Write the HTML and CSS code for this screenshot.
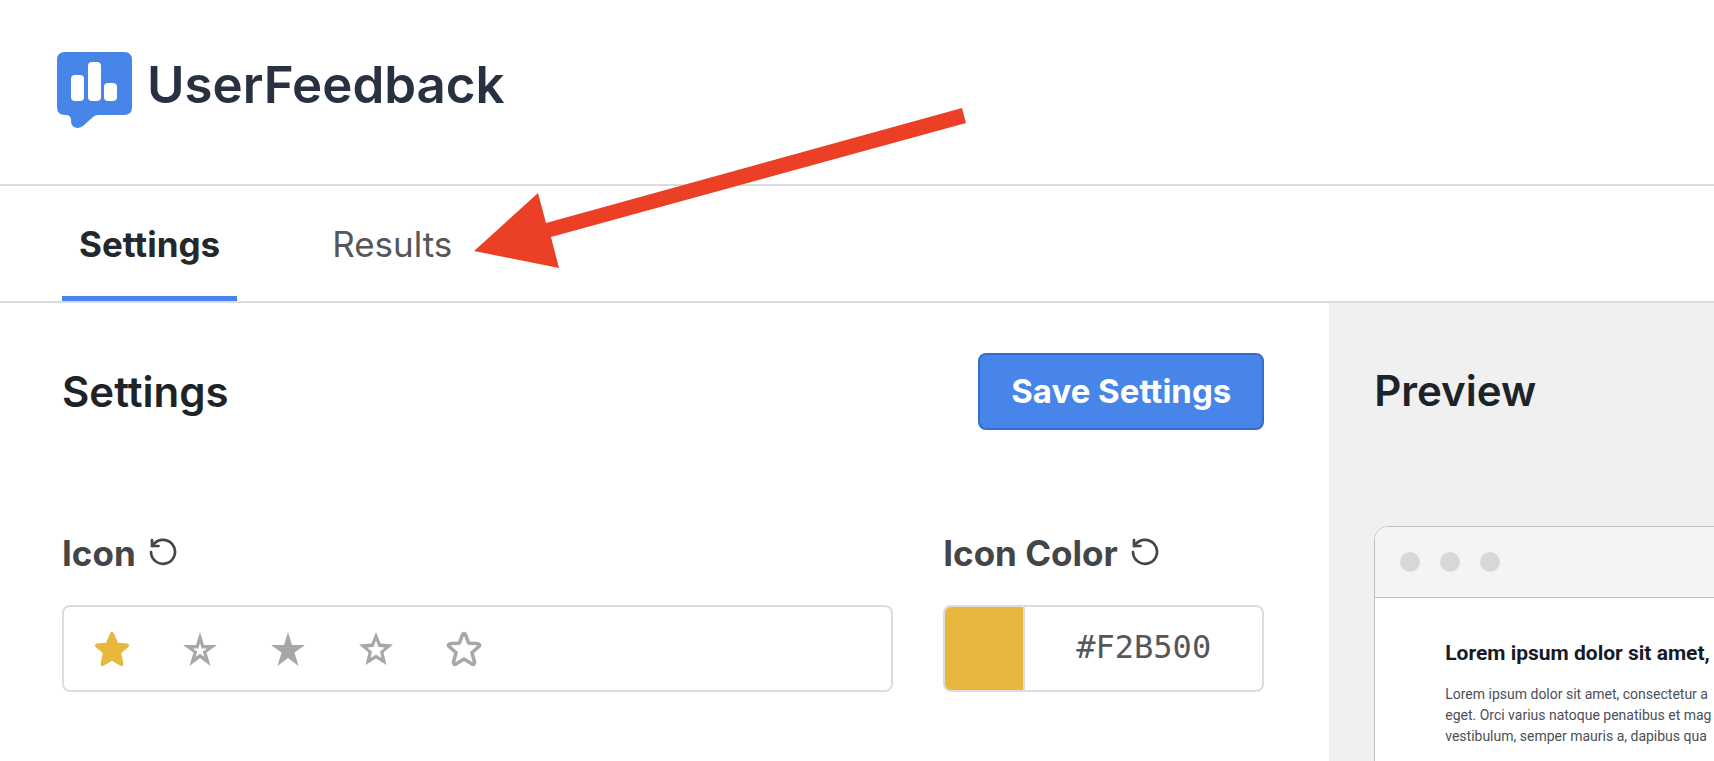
FILE: index.html
```html
<!DOCTYPE html>
<html lang="en">
	<head>
		<meta charset="UTF-8">
		<title>UserFeedback</title>
		<link rel="stylesheet" href="styles.css">
	</head>
	<body>
		<header class="header">
			<a class="logo" href="#">
				<svg class="logo-mark" viewBox="0 0 75 76" width="75" height="76" aria-hidden="true">
					<path fill="#4785e8" d="M8 0H67Q75 0 75 8V55Q75 63 67 63H41Q38 63 36 65L26 74Q23 76 20 76Q14 75 14 69V67Q13 63 9 63H8Q0 63 0 55V8Q0 0 8 0Z"/>
					<rect x="14" y="23" width="13" height="26" rx="4" fill="#fff"/>
					<rect x="31" y="10" width="13" height="39" rx="4" fill="#fff"/>
					<rect x="47" y="31" width="13" height="18" rx="4" fill="#fff"/>
				</svg>
				<span class="logo-text">UserFeedback</span>
			</a>
		</header>

		<nav class="tabs">
			<a class="tab current" href="#settings">Settings</a>
			<a class="tab" href="#results">Results</a>
		</nav>

		<main class="content">
			<section class="settings" id="settings">
				<div class="settings-head">
					<h2>Settings</h2>
					<button class="save" type="button">Save Settings</button>
				</div>

				<div class="fields">
					<div class="field">
						<div class="field-head">
							<span class="field-label" id="icon-label">Icon</span>
							<button class="reset" type="button" aria-label="Reset icon">
								<svg viewBox="0 0 28 28" width="28" height="28"><path d="M2 14A12 12 0 1 0 3.500 8M3 2V8H9.500"/></svg>
							</button>
						</div>
						<div class="box stars" role="radiogroup" aria-labelledby="icon-label">
							<label class="star">
								<input type="radio" name="icon" aria-label="Rounded star" checked>
								<svg viewBox="0 0 36 36" width="36" height="36"><path class="solid round" d="M18 3L22.500 13.500L33 14.500L25 21.500L27.500 33L18 27.500L8.500 33L11 21.500L3 14.500L13.500 13.500Z"/></svg>
							</label>
							<label class="star">
								<input type="radio" name="icon" aria-label="Star with small outline">
								<svg viewBox="0 0 36 36" width="36" height="36"><path class="solid" fill-rule="evenodd" d="M18 1L22 14H35L24.500 21.500L28.500 35L18 27L7.500 35L11.500 21.500L1 14H14ZM18 12L16.300 17.500H11L15.200 20.700L13.500 26L18 22.800L22.500 26L20.800 20.700L25 17.500H19.700Z"/></svg>
							</label>
							<label class="star">
								<input type="radio" name="icon" aria-label="Solid star">
								<svg viewBox="0 0 36 36" width="36" height="36"><path class="solid" d="M18 1L22 14H35L24.500 21.500L28.500 35L18 27L7.500 35L11.500 21.500L1 14H14Z"/></svg>
							</label>
							<label class="star">
								<input type="radio" name="icon" aria-label="Outlined star">
								<svg viewBox="0 0 36 36" width="36" height="36"><path class="solid" fill-rule="evenodd" d="M18 1L22.500 12.500L35 13.500L25.500 21.500L28.500 34L18 27.500L7.500 34L10.500 21.500L1 13.500L13.500 12.500ZM18 9.500L15.500 16L9 16.500L14 20.500L12.500 27L18 23.500L23.500 27L22 20.500L27 16.500L20.500 16Z"/></svg>
							</label>
							<label class="star">
								<input type="radio" name="icon" aria-label="Rounded outlined star">
								<svg viewBox="0 0 36 36" width="36" height="36"><path class="outline" d="M16.500 3.500Q18 1.500 19.500 3.500L22.500 12L32 12.700Q34.500 13.500 33 15.500L26 21.500L28.500 31Q28.500 34 26 33L18 28L10 33Q7.500 34 7.500 31L10 21.500L3 15.500Q1.500 13.500 4 12.700L13.500 12Z"/></svg>
							</label>
						</div>
					</div>

					<div class="field">
						<div class="field-head">
							<label class="field-label" for="icon-color">Icon Color</label>
							<button class="reset" type="button" aria-label="Reset icon color">
								<svg viewBox="0 0 28 28" width="28" height="28"><path d="M2 14A12 12 0 1 0 3.500 8M3 2V8H9.500"/></svg>
							</button>
						</div>
						<div class="box color">
							<button class="swatch" type="button" aria-label="Pick icon color"></button>
							<input class="color-value" id="icon-color" type="text" value="#F2B500">
						</div>
					</div>
				</div>
			</section>

			<section class="preview">
				<h2>Preview</h2>
				<div class="browser">
					<div class="browser-bar">
						<span class="dot"></span>
						<span class="dot"></span>
						<span class="dot"></span>
					</div>
					<div class="browser-page">
						<h3>Lorem ipsum dolor sit amet,</h3>
						<p>
							Lorem ipsum dolor sit amet, consectetur a<br>
							eget. Orci varius natoque penatibus et mag<br>
							vestibulum, semper mauris a, dapibus qua
						</p>
					</div>
				</div>
			</section>
		</main>

		<!-- arrow pointing at the Results tab -->
		<svg class="arrow" viewBox="0 0 494 162" width="494" height="162" aria-hidden="true">
			<path fill="#eb4025" d="M1 145L65 87L73 117L489 2L493 17L78 131L86 162Z"/>
		</svg>
	</body>
</html>
```
FILE: styles.css
```css
*{
	box-sizing: border-box;
	margin: 0;
	padding: 0;
}
body{
	display: flex;
	flex-direction: column;
	position: relative;
	height: 100vh;
	overflow: hidden;
	background: #fff;
	color: #1d2327;
	font-family: Inter, "Liberation Sans", sans-serif;
}
button,input{
	font: inherit;
}
button{
	cursor: pointer;
}
a{
	color: inherit;
	text-decoration: none;
}
h2{
	font-size: 42px;
	font-weight: 600;
	line-height: 50px;
}

/* header */
.header{
	padding: 52px 57px 56px;
	border-bottom: 2px solid #dcdcde;
}
.logo{
	display: flex;
	align-items: flex-start;
	gap: 15px;
}
.logo-mark{
	flex: none;
}
.logo-text{
	font-size: 51px;
	font-weight: 600;
	line-height: 65px;
	color: #283142;
}

/* tabs */
.tabs{
	display: flex;
	gap: 78px;
	padding: 0 62px;
	border-bottom: 2px solid #dcdcde;
}
.tab{
	padding: 38px 17px 32px;
	border-bottom: 5px solid transparent;
	font-size: 35px;
	line-height: 40px;
	color: #555759;
}
.tab.current{
	border-color: #4785e8;
	font-weight: 700;
	color: #23282d;
}

/* content */
.content{
	display: grid;
	grid-template-columns: minmax(0, 38fr) minmax(0, 11fr);
	flex: 1;
	min-height: 0;
}
.settings{
	padding: 50px 65px 0 62px;
}
.settings-head{
	display: flex;
	justify-content: space-between;
	align-items: center;
}
.save{
	padding: 16px 31px;
	border: 2px solid #316dd3;
	border-radius: 8px;
	background: #4785e8;
	font-size: 33px;
	font-weight: 700;
	line-height: 41px;
	color: #fff;
}
.fields{
	display: grid;
	grid-template-columns: minmax(0, 1fr) 321px;
	gap: 50px;
	margin-top: 103px;
}
.field-head{
	display: flex;
	align-items: center;
	gap: 13px;
	margin-bottom: 32px;
}
.field-label{
	font-size: 35px;
	font-weight: 700;
	line-height: 40px;
	color: #434547;
}
.reset{
	display: flex;
	padding-bottom: 2px;
	border: 0;
	background: none;
}
.reset svg{
	fill: none;
	stroke: #434547;
	stroke-width: 2.7;
	stroke-linecap: round;
}
.box{
	display: flex;
	height: 87px;
	border: 2px solid #dcdcde;
	border-radius: 8px;
	overflow: hidden;
}
.stars{
	align-items: center;
	gap: 52px;
	padding: 0 30px;
}
.star{
	display: flex;
	position: relative;
	color: #a7a7a7;
	cursor: pointer;
}
.star input{
	position: absolute;
	width: 36px;
	height: 36px;
	opacity: 0;
}
.star:has(:checked){
	color: #e7b73e;
}
.solid{
	fill: currentColor;
}
.round{
	stroke: currentColor;
	stroke-width: 4;
	stroke-linejoin: round;
}
.outline{
	fill: none;
	stroke: currentColor;
	stroke-width: 3.6;
	stroke-linejoin: round;
}
.swatch{
	flex: none;
	width: 80px;
	border: 0;
	border-right: 2px solid #dcdcde;
	background: #e7b73e;
}
.color-value{
	flex: 1;
	min-width: 0;
	padding: 0 0 4px;
	border: 0;
	background: none;
	font-family: "DejaVu Sans Mono", monospace;
	font-size: 32px;
	text-align: center;
	color: #555759;
}

/* preview */
.preview{
	padding: 63px 0 0 45px;
	background: #f0f0f1;
	overflow: hidden;
}
.browser{
	min-width: 800px;
	height: 600px;
	margin-top: 110px;
	border: 1px solid #c0c0c2;
	border-radius: 14px;
	background: #fff;
	overflow: hidden;
}
.browser-bar{
	display: flex;
	align-items: center;
	gap: 20px;
	height: 71px;
	padding: 0 25px;
	border-bottom: 1px solid #c0c0c2;
	background: #f4f4f4;
}
.dot{
	width: 20px;
	height: 20px;
	border-radius: 50%;
	background: #d8d8d8;
}
.browser-page{
	padding: 42px 70px;
	font-family: Roboto, "Liberation Sans", sans-serif;
	white-space: nowrap;
}
.browser-page h3{
	margin-bottom: 18px;
	font-size: 21px;
	font-weight: 700;
	line-height: 26px;
	color: #161b28;
}
.browser-page p{
	font-size: 14px;
	line-height: 21px;
	color: #4b4f56;
}

.arrow{
	position: absolute;
	top: 106px;
	left: 473px;
	pointer-events: none;
}
```
